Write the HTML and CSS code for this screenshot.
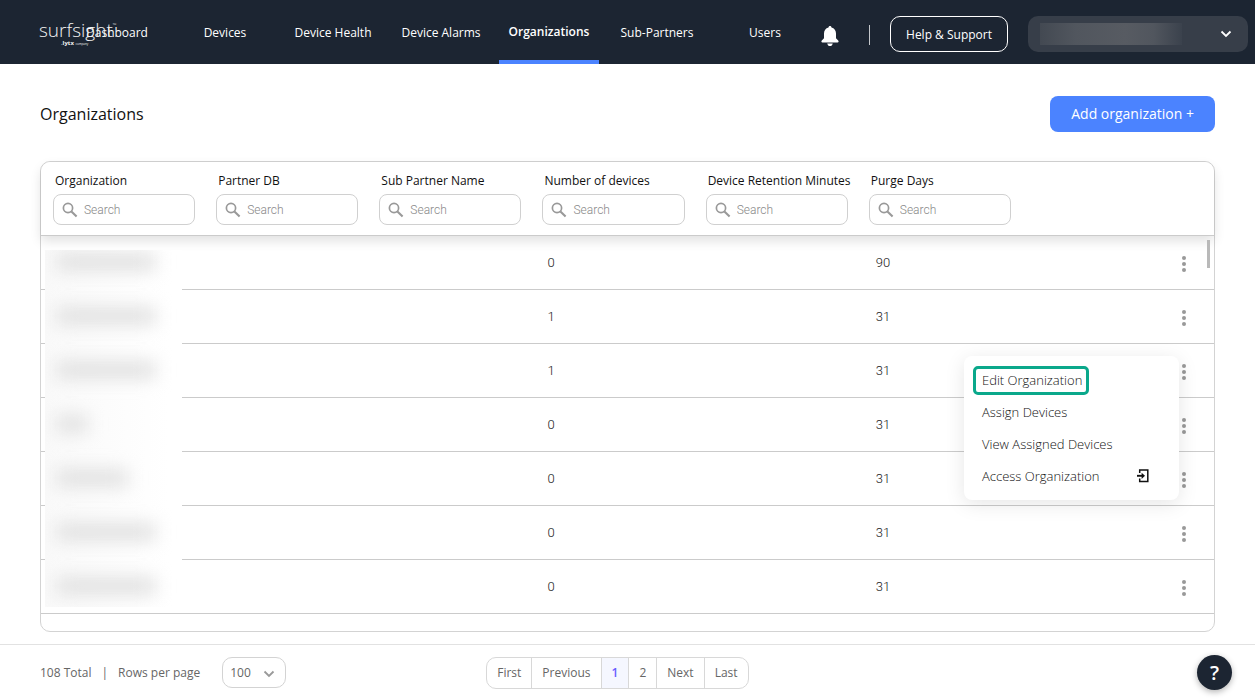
FILE: index.html
```html
<!DOCTYPE html>
<html lang="en">
<head>
    <meta charset="UTF-8">
    <meta name="viewport" content="width=device-width, initial-scale=1.0">
    <title>Organizations</title>
    <link rel="stylesheet" href="styles.css">
</head>
<body>

    <svg width="0" height="0" class="sprite" aria-hidden="true">
        <symbol id="search" viewBox="0 0 18 18">
            <circle cx="7" cy="7" r="4.6" fill="none" stroke="currentColor" stroke-width="1.7"/>
            <path d="M10.4 10.4L15.6 15.6" stroke="currentColor" stroke-width="2.1"/>
        </symbol>
        <symbol id="dots" viewBox="0 0 4 16">
            <circle cx="2" cy="2" r="2"/><circle cx="2" cy="8" r="2"/><circle cx="2" cy="14" r="2"/>
        </symbol>
        <symbol id="chevron" viewBox="0 0 12 8">
            <path d="M1.5 1.5L6 6L10.5 1.5" fill="none" stroke="currentColor" stroke-width="1.8"/>
        </symbol>
    </svg>

    <header class="topbar">
        <a class="logo" href="#" aria-label="surfsight by lytx">
            <span class="logo-name">surfsight<sup>™</sup></span>
            <span class="logo-sub">.<b>lytx</b> <small>company</small></span>
        </a>
        <nav class="nav">
            <a href="#">Dashboard</a>
            <a href="#">Devices</a>
            <a href="#">Device Health</a>
            <a href="#">Device Alarms</a>
            <a href="#" class="active">Organizations</a>
            <a href="#">Sub-Partners</a>
            <a href="#">Users</a>
        </nav>
        <div class="tools">
            <button class="bell" aria-label="Notifications">
                <svg width="18" height="20" viewBox="0 0 18 20" fill="#fff">
                    <path d="M9 0C9.9 0 10.5 .6 10.5 1.5C13.4 2.3 15 4.6 15 7.5V12.2L17.2 14.6C18 15.5 17.6 16.5 16.6 16.5H1.4C.4 16.5 0 15.5 .8 14.6L3 12.2V7.5C3 4.6 4.6 2.3 7.5 1.5C7.5 .6 8.1 0 9 0Z"/>
                    <path d="M6.2 17.4H11.8C11.4 19 10.4 20 9 20S6.6 19 6.2 17.4Z"/>
                </svg>
            </button>
            <span class="divider"></span>
            <button class="help-btn">Help &amp; Support</button>
            <button class="account" aria-label="Account">
                <span class="account-name"></span>
                <svg width="12" height="8"><use href="#chevron"/></svg>
            </button>
        </div>
    </header>

    <main class="content">
        <div class="title-row">
            <h1>Organizations</h1>
            <button class="add-btn">Add organization +</button>
        </div>

        <div class="card">
            <table>
                <thead>
                    <tr>
                        <th><label for="f1">Organization</label><div class="search"><svg width="18" height="18"><use href="#search"/></svg><input id="f1" type="text" placeholder="Search"></div></th>
                        <th><label for="f2">Partner DB</label><div class="search"><svg width="18" height="18"><use href="#search"/></svg><input id="f2" type="text" placeholder="Search"></div></th>
                        <th><label for="f3">Sub Partner Name</label><div class="search"><svg width="18" height="18"><use href="#search"/></svg><input id="f3" type="text" placeholder="Search"></div></th>
                        <th><label for="f4">Number of devices</label><div class="search"><svg width="18" height="18"><use href="#search"/></svg><input id="f4" type="text" placeholder="Search"></div></th>
                        <th><label for="f5">Device Retention Minutes</label><div class="search"><svg width="18" height="18"><use href="#search"/></svg><input id="f5" type="text" placeholder="Search"></div></th>
                        <th><label for="f6">Purge Days</label><div class="search"><svg width="18" height="18"><use href="#search"/></svg><input id="f6" type="text" placeholder="Search"></div></th>
                        <th class="actions"></th>
                    </tr>
                </thead>
                <tbody>
                    <tr><td></td><td></td><td></td><td>0</td><td></td><td>90</td><td class="actions"><button class="more" aria-label="More"><svg width="4" height="16"><use href="#dots"/></svg></button></td></tr>
                    <tr><td></td><td></td><td></td><td>1</td><td></td><td>31</td><td class="actions"><button class="more" aria-label="More"><svg width="4" height="16"><use href="#dots"/></svg></button></td></tr>
                    <tr><td></td><td></td><td></td><td>1</td><td></td><td>31</td>
                        <td class="actions">
                            <button class="more" aria-label="More"><svg width="4" height="16"><use href="#dots"/></svg></button>
                            <div class="menu">
                                <button class="selected">Edit Organization</button>
                                <button>Assign Devices</button>
                                <button>View Assigned Devices</button>
                                <button>Access Organization
                                    <svg width="12" height="14" viewBox="0 0 12 14" fill="none" stroke="#111" stroke-width="1.5">
                                        <path d="M2.7 4V1H10.8V12.6H2.7V9.6"/>
                                        <path d="M0 6.8H6" stroke-width="1.9"/>
                                        <path d="M4.6 3.7L8 6.8L4.6 9.9Z" fill="#111" stroke="none"/>
                                    </svg>
                                </button>
                            </div>
                        </td>
                    </tr>
                    <tr><td></td><td></td><td></td><td>0</td><td></td><td>31</td><td class="actions"><button class="more" aria-label="More"><svg width="4" height="16"><use href="#dots"/></svg></button></td></tr>
                    <tr><td></td><td></td><td></td><td>0</td><td></td><td>31</td><td class="actions"><button class="more" aria-label="More"><svg width="4" height="16"><use href="#dots"/></svg></button></td></tr>
                    <tr><td></td><td></td><td></td><td>0</td><td></td><td>31</td><td class="actions"><button class="more" aria-label="More"><svg width="4" height="16"><use href="#dots"/></svg></button></td></tr>
                    <tr><td></td><td></td><td></td><td>0</td><td></td><td>31</td><td class="actions"><button class="more" aria-label="More"><svg width="4" height="16"><use href="#dots"/></svg></button></td></tr>
                </tbody>
            </table>
            <!-- hidden organization names -->
            <div class="redacted">
                <i></i><i></i><i></i><i class="short"></i><i class="mid"></i><i></i><i></i>
            </div>
            <div class="scroll-thumb"></div>
        </div>
    </main>

    <footer class="footer">
        <div class="rows-info">
            <span>108 Total</span>
            <span>|</span>
            <label for="perPage">Rows per page</label>
            <div class="per-page">
                <select id="perPage">
                    <option>100</option>
                    <option>50</option>
                </select>
                <svg width="12" height="8"><use href="#chevron"/></svg>
            </div>
        </div>
        <div class="pager">
            <button>First</button>
            <button>Previous</button>
            <button class="current">1</button>
            <button>2</button>
            <button>Next</button>
            <button>Last</button>
        </div>
        <button class="help-fab" aria-label="Help">?</button>
    </footer>

</body>
</html>
```
FILE: styles.css
```css
* { box-sizing: border-box; }

body {
    margin: 0;
    height: 100vh;
    display: flex;
    flex-direction: column;
    overflow: hidden;
    font-family: "Open Sans", sans-serif;
    font-size: 12px;
    color: #111;
    background: #fff;
}

button, input, select {
    font-family: inherit;
    font-size: inherit;
    color: inherit;
}

button {
    background: none;
    border: 0;
    padding: 0;
    cursor: pointer;
    white-space: nowrap;
}

.sprite { position: absolute; }

/* top bar */
.topbar {
    position: relative;
    display: flex;
    justify-content: space-between;
    height: 64px;
    flex-shrink: 0;
    padding: 0 7px 0 67px;
    background: #1c2532;
    color: #fff;
}

.logo {
    position: absolute;
    left: 39px;
    top: 18px;
    display: flex;
    flex-direction: column;
    color: #f2f2f2;
    text-decoration: none;
}

.logo-name {
    font-size: 19px;
    line-height: 24px;
    font-weight: 300;
}

.logo-name sup {
    font-size: 5px;
    line-height: 0;
    vertical-align: 10px;
}

.logo-sub {
    font-size: 6px;
    line-height: 2px;
    padding-left: 22px;
}

.logo-sub small { font-size: 3px; }

.nav {
    display: flex;
    gap: 8px;
}

.nav a {
    width: 100px;
    line-height: 65px;
    text-align: center;
    color: #fff;
    text-decoration: none;
    white-space: nowrap;
}

.nav .active {
    line-height: 63px;
    font-weight: 600;
    border-bottom: 4px solid #4b83ff;
}

.tools {
    display: flex;
    align-items: center;
}

.bell {
    height: 20px;
    margin-top: 8px;
}

.bell svg { display: block; }

.divider {
    width: 1px;
    height: 20px;
    margin: 5px 20px 0 30px;
    background: #c4c7cb;
}

.help-btn {
    height: 36px;
    margin: 4px 20px 0 0;
    padding: 0 15px;
    border: 1px solid #fff;
    border-radius: 10px;
}

.account {
    display: flex;
    flex-shrink: 0;
    align-items: center;
    justify-content: space-between;
    width: 220px;
    height: 36px;
    margin-top: 4px;
    padding: 0 16px 0 12px;
    border-radius: 10px;
    background: #373e49;
}

.account-name {
    width: 142px;
    height: 22px;
    background: linear-gradient(90deg, #434952, #51565e 25%, #575b62 60%, #51565e 80%, #3b424d);
}

/* page */
.content {
    flex: 1;
    min-height: 0;
    display: flex;
    flex-direction: column;
    padding: 32px 40px 12px;
}

.title-row {
    display: flex;
    justify-content: space-between;
    align-items: center;
    margin-bottom: 29px;
}

h1 {
    margin: 0;
    font-size: 16px;
    font-weight: 400;
}

.add-btn {
    height: 36px;
    padding: 0 21px 1px;
    border-radius: 8px;
    background: #4b83ff;
    color: #fff;
    font-size: 14px;
}

.card {
    position: relative;
    flex: 1;
    min-height: 0;
    border: 1px solid #d3d3d3;
    border-radius: 10px;
}

table {
    width: 100%;
    table-layout: fixed;
    border-collapse: separate;
    border-spacing: 0;
}

thead {
    position: relative;
    border-radius: 10px 10px 0 0;
    box-shadow: 0 5px 12px rgba(0, 0, 0, 0.12);
}

th {
    height: 74px;
    padding: 11px 9px 10px 12px;
    vertical-align: top;
    text-align: left;
    font-weight: 400;
    border-bottom: 1px solid #cbcbcb;
    background: #fff;
}

th:first-child { border-top-left-radius: 10px; }
th:last-child { border-top-right-radius: 10px; }

th label {
    display: block;
    padding-left: 2px;
    margin-bottom: 5px;
    line-height: 16px;
    font-weight: 500;
    white-space: nowrap;
}

th.actions { width: 194px; }

.search {
    display: flex;
    align-items: center;
    gap: 5px;
    height: 31px;
    padding: 0 7px;
    border: 1px solid #d0d0d0;
    border-radius: 8px;
    color: #999;
}

.search svg { flex-shrink: 0; }

.search input {
    width: 100%;
    min-width: 0;
    padding: 0;
    border: 0;
    outline: none;
    background: none;
    font-family: Roboto, sans-serif;
    font-weight: 300;
}

.search input::placeholder { color: #888; }

td {
    height: 54px;
    padding: 0 17px;
    border-bottom: 1px solid #cbcbcb;
    font-family: Roboto, sans-serif;
    font-size: 13px;
    font-weight: 300;
    color: #222;
}

td:nth-child(6) { padding-left: 19px; }

td.actions {
    position: relative;
    padding: 0 28px 0 0;
    text-align: right;
}

.more svg {
    display: block;
    fill: #999;
}

.more {
    vertical-align: middle;
    padding-top: 2px;
}

.menu {
    position: absolute;
    z-index: 2;
    top: 12px;
    right: 35px;
    display: flex;
    flex-direction: column;
    width: 215px;
    padding: 8px;
    border-radius: 8px;
    background: #fff;
    box-shadow: 0 4px 20px rgba(0, 0, 0, 0.1);
}

.menu button {
    display: flex;
    align-items: center;
    justify-content: space-between;
    height: 32px;
    padding: 0 22px 1px 10px;
    font-family: "Open Sans", sans-serif;
    font-weight: 300;
    color: #111;
}

.menu .selected {
    align-self: flex-start;
    height: 29px;
    margin: 2px 1px 1px;
    padding: 0 4px 2px 6px;
    border: 3px solid #0aa88b;
    border-radius: 5px;
}

.redacted {
    position: absolute;
    z-index: 1;
    top: 88px;
    left: 4px;
    display: flex;
    flex-direction: column;
    gap: 38px;
    width: 137px;
    height: 357px;
    padding: 4px 0 0 12px;
    overflow: hidden;
    background: linear-gradient(90deg, #f9f9f9, #fff 90%);
}

.redacted i {
    flex-shrink: 0;
    width: 98px;
    height: 16px;
    background: #dedede;
    filter: blur(9px);
}

.redacted .short { width: 30px; }
.redacted .mid { width: 70px; }

.scroll-thumb {
    position: absolute;
    top: 78px;
    right: 4px;
    width: 3px;
    height: 28px;
    background: #b9b9b9;
}

/* footer */
.footer {
    display: grid;
    grid-template-columns: 12fr auto 13fr;
    align-items: center;
    height: 56px;
    flex-shrink: 0;
    padding: 0 23px 0 40px;
    border-top: 1px solid #e2e2e2;
    color: #666;
}

.rows-info {
    display: flex;
    align-items: center;
    gap: 10px;
}

.per-page {
    position: relative;
    margin-left: 12px;
}

.per-page select {
    appearance: none;
    width: 64px;
    height: 31px;
    padding: 0 7px;
    border: 1px solid #d3d3d3;
    border-radius: 10px;
    background: #fff;
}

.per-page svg {
    position: absolute;
    right: 11px;
    top: 13px;
    color: #999;
    pointer-events: none;
}

.pager {
    display: flex;
    height: 32px;
    border: 1px solid #d8d8d8;
    border-radius: 10px;
    overflow: hidden;
}

.pager button { padding: 0 10px; }
.pager button + button { border-left: 1px solid #d8d8d8; }

.pager .current {
    background: #f5f7ff;
    color: #6a5cff;
    font-weight: 600;
}

.help-fab {
    justify-self: end;
    width: 35px;
    height: 35px;
    border-radius: 50%;
    background: #1c2532;
    color: #fff;
    font-size: 20px;
    font-weight: 600;
    box-shadow: 0 2px 6px rgba(0, 0, 0, 0.3);
}
```
